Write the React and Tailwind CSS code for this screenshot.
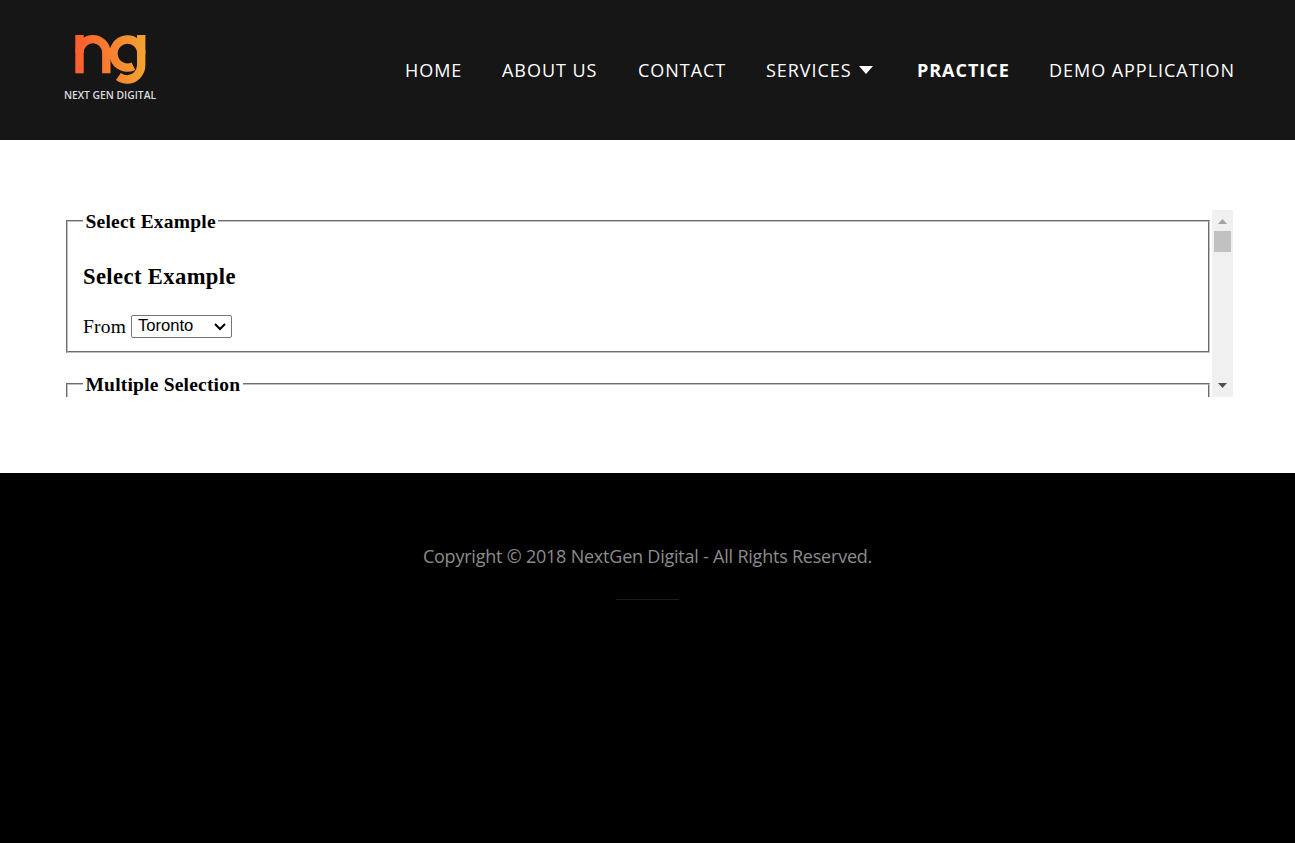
const nav = [
  ["HOME", "w-[57px]"],
  ["ABOUT US", "w-[96px]"],
  ["CONTACT", "w-[88px]"],
  ["SERVICES", "w-[111px]"],
  ["PRACTICE", "w-[92px]"],
  ["DEMO APPLICATION", "w-[186px]"],
];

function Logo() {
  return (
    <div className="flex h-20 w-[120px] flex-col items-center pt-[4px]">
      <svg width="74" height="52" viewBox="0 0 74 52" fill="none">
        <defs>
          <linearGradient id="ng" gradientUnits="userSpaceOnUse" x1="0" y1="0" x2="74" y2="0">
            <stop offset="0" stopColor="#ff5a2e" />
            <stop offset="1" stopColor="#f2a531" />
          </linearGradient>
        </defs>
        <g stroke="url(#ng)" strokeWidth="8.400">
          <path d="M6.500 1V39.300" />
          <path d="M6.500 18.500A13.400 13.400 0 0 1 33.300 18.500V39.300" />
          <path d="M68.300 19.500A13.900 14 0 1 0 60.400 32.200" />
          <path d="M68.200 1V31A14 14.500 0 0 1 54.200 45.500Q49.500 45.500 45.400 42.500" />
        </g>
      </svg>
      <span className="mt-[3px] whitespace-nowrap text-[10.300px] leading-3 font-semibold text-[#ddd]">NEXT GEN DIGITAL</span>
    </div>
  );
}

export default function App() {
  return (
    <div className="flex h-[843px] w-[1295px] flex-col overflow-hidden bg-black font-['Open_Sans',sans-serif]">
      <header className="flex h-[140px] items-center justify-between bg-[#161616] pr-[60px] pl-[50px]">
        <Logo />
        <nav className="flex gap-10 text-lg tracking-[0.960px] text-white">
          {nav.map(([t, w]) => (
            <a key={t} className={`${w} flex items-center whitespace-nowrap ${t === "PRACTICE" ? "font-bold" : ""}`}>
              {t}
              {t === "SERVICES" && (
                <svg className="ml-[7px] shrink-0" width="14" height="8" viewBox="0 0 14 8" fill="#fff"><path d="M0 0H14L7 8Z" /></svg>
              )}
            </a>
          ))}
        </nav>
      </header>
      <main className="flex h-[333px] bg-white px-[62px] pt-[70px] font-['Liberation_Serif',serif] text-[19.500px] text-black">
        <div className="h-[187px] w-[1150px] overflow-hidden pl-1 pr-[2px]">
          <fieldset className="h-[143px] border-2 border-[#c0c0c0] px-[15px] [border-style:groove]">
            <legend className="px-[2.500px] pt-px leading-[21px] font-bold tracking-[0.220px]">Select Example</legend>
            <h3 className="mt-[31px] text-[22.600px] leading-[27px] font-bold tracking-[0.390px]">Select Example</h3>
            <div className="mt-[22px] flex h-[29px] items-center">
              <label className="w-[43px] tracking-[0.250px]">From</label>
              <div className="ml-[5px] flex h-[23px] w-[101px] items-center justify-between rounded-[2px] border border-[#767676] pr-[5px] pl-[6px] font-['Liberation_Sans',sans-serif] text-[16.600px]">
                <span>Toronto</span>
                <svg width="12" height="8" viewBox="0 0 12 8" fill="none" stroke="#000" strokeWidth="2"><path d="M1 1L6 6L11 1" /></svg>
              </div>
            </div>
          </fieldset>
          <fieldset className="mt-5 h-[143px] border-2 border-[#c0c0c0] px-[15px] [border-style:groove]">
            <legend className="px-[2.500px] pt-px leading-[21px] font-bold tracking-[0.200px]">Multiple Selection</legend>
          </fieldset>
        </div>
        <div className="flex h-[187px] w-[21px] flex-col items-center bg-[#f0f0f0]">
          <svg width="21" height="21" fill="#a3a3a3"><path d="M6 14L10.500 9L15 14Z" /></svg>
          <div className="h-[21px] w-[17px] bg-[#c1c1c1]" />
          <svg className="mt-auto" width="21" height="21" fill="#505050"><path d="M6 7L10.500 12L15 7Z" /></svg>
        </div>
      </main>
      <footer className="flex flex-1 flex-col items-center pt-[69px]">
        <p className="text-lg leading-[28px] font-normal tracking-[-0.220px] text-[#8c8c8c]">Copyright © 2018 NextGen Digital - All Rights Reserved.</p>
        <div className="mt-[29px] h-px w-[63px] bg-[#1c1c1c]" />
      </footer>
    </div>
  );
}
